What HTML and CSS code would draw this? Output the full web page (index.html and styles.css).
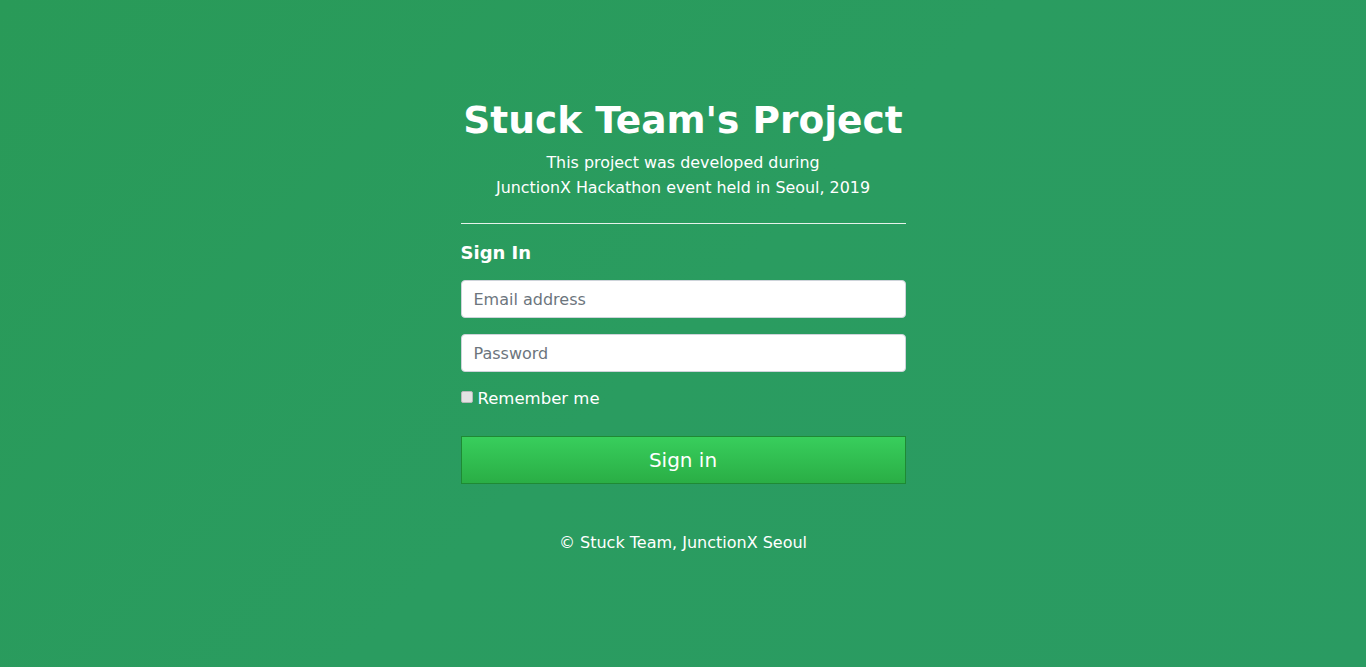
FILE: index.html
```html
<!DOCTYPE html>
<html lang="en">
<head>
<meta charset="utf-8">
<title>Stuck Team's Project</title>
<link rel="stylesheet" href="styles.css">
</head>
<body>
<main class="page">
  <div class="box">
    <header class="intro">
      <h1 class="title">Stuck Team's Project</h1>
      <p class="lead">This project was developed during<br>JunctionX Hackathon event held in Seoul, 2019</p>
    </header>
    <hr class="rule">
    <form class="form">
      <h2 class="form-title">Sign In</h2>
      <input class="field" type="email" placeholder="Email address">
      <input class="field" type="password" placeholder="Password">
      <label class="remember"><input class="check" type="checkbox"> Remember me</label>
      <button class="btn" type="button">Sign in</button>
    </form>
    <p class="foot">© Stuck Team, JunctionX Seoul</p>
  </div>
</main>
</body>
</html>
```

FILE: styles.css
```css
* { box-sizing: border-box; }
html, body { margin: 0; height: 100%; }
body {
  font-family: "DejaVu Sans", "Noto Sans", sans-serif;
  color: #fff;
  background: linear-gradient(135deg, #299a58 0%, #2a9c60 50%, #2a9b62 100%);
}
.page {
  display: flex;
  justify-content: center;
  padding-top: 96px;
}
.box {
  width: 445px;
  display: flex;
  flex-direction: column;
}
.intro { text-align: center; }
.title {
  margin: 0;
  font-size: 37.5px;
  font-weight: 700;
  line-height: 48px;
}
.lead {
  margin: 6px 0 0;
  font-size: 15.9px;
  line-height: 25px;
}
.rule {
  margin: 23px 0 0;
  border: 0;
  border-top: 1px solid #e6f2ea;
  height: 0;
}
.form { display: flex; flex-direction: column; }
.form-title {
  margin: 16px 0 0;
  font-size: 18px;
  font-weight: 700;
  line-height: 26px;
}
.field {
  margin-top: 14px;
  height: 38px;
  padding: 0 12px;
  border: 1px solid #ced4da;
  border-radius: 4px;
  font-family: inherit;
  font-size: 16px;
  color: #495057;
  background: #fff;
}
.field + .field { margin-top: 16px; }
.field::placeholder { color: #6c757d; }
.remember {
  margin-top: 17px;
  display: flex;
  align-items: center;
  gap: 3px;
  font-size: 16.5px;
  line-height: 20px;
}
.check {
  appearance: none;
  -webkit-appearance: none;
  margin: 0 2px 4px 0;
  width: 12px;
  height: 12px;
  border: 1px solid #b9b9b9;
  border-radius: 2px;
  background: #e3e3e3;
}
.btn {
  margin-top: 27px;
  height: 48px;
  border: 1px solid #1e8a34;
  border-radius: 0;
  background: linear-gradient(#38ce5c, #2aae45);
  color: #fff;
  font-family: inherit;
  font-size: 20px;
}
.foot {
  margin: 49px 0 0;
  text-align: center;
  font-size: 16px;
  line-height: 20px;
}
```
